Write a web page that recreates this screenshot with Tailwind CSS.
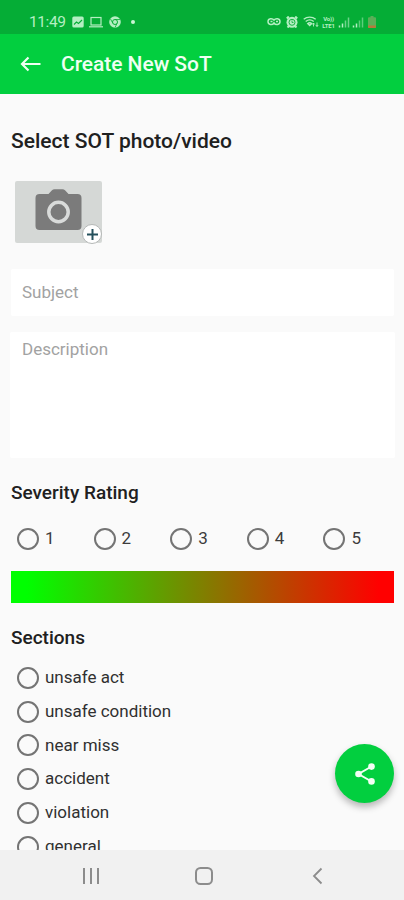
<!DOCTYPE html>
<html lang="en">
<head>
<meta charset="utf-8">
<meta name="viewport" content="width=device-width, initial-scale=1">
<title>Create New SoT</title>
<script src="https://cdn.jsdelivr.net/npm/@tailwindcss/browser@4"></script>
</head>
<body class="bg-[#fafafa]">
<div class="relative flex h-[900px] w-[404px] flex-col overflow-hidden bg-[#fafafa] font-['Roboto',sans-serif] text-[#202020]">
  <!-- Status bar -->
  <header class="flex h-[34px] shrink-0 items-center justify-between bg-[#05ad36] pt-[9px] pr-[28px] pl-[29px] text-[#b4efc2]">
    <div class="flex items-center">
      <span class="w-[43px] text-[15.5px] leading-4 tracking-[-0.4px]">11:49</span>
      <svg class="h-3 w-3" viewBox="0 0 12 12"><rect x=".3" y=".5" width="11.4" height="11" rx="1.5" fill="currentColor"/><path d="M2 8.500 4.500 6l2 1.500L10 4" fill="none" stroke="#05ad36" stroke-width="1.100"/></svg>
      <svg class="ml-[5px] h-3 w-[14px]" viewBox="0 0 14 12" fill="none" stroke="currentColor" stroke-width="1.2"><rect x="2" y="1.5" width="10" height="7.5"/><path d="M0 10.8h14"/></svg>
      <svg class="ml-[6px] h-3 w-3" viewBox="0 0 12 12"><circle cx="6" cy="6" r="5.8" fill="currentColor"/><circle cx="6" cy="6" r="2.5" fill="none" stroke="#05ad36"/><path d="M6 3.5h5M3.8 7.2 1.5 3M8 7.5 6 11.5" stroke="#05ad36" stroke-width=".8"/></svg>
      <span class="ml-[10px] h-[4px] w-[4px] rounded-full bg-[#c9f5d3]"></span>
    </div>
    <div class="flex items-center">
      <svg class="h-3 w-[14px]" viewBox="0 0 14 12" fill="none" stroke="currentColor" stroke-width="1.5"><path d="M7 4C5.500 2 1 2 1 5.500s4.500 4 6 1.500c1.500 2.500 6 2 6-1.500S8.500 2 7 4ZM3.500 5.500h2m3.500 0h2"/></svg>
      <svg class="ml-[5px] h-3 w-3" viewBox="0 0 12 12"><circle cx="6" cy="6.300" r="5.500" fill="currentColor"/><path d="m.8 2.500 2-2M11.200 2.500l-2-2M1.500 11.500l2-2M10.500 11.500l-2-2" stroke="currentColor" stroke-width="2"/><circle cx="6" cy="6.300" r="3" fill="none" stroke="#05ad36" stroke-width=".9"/><path d="M6 4.500v2h1.500" fill="none" stroke="#05ad36" stroke-width=".8"/></svg>
      <svg class="ml-[5px] h-3 w-[16px]" viewBox="0 0 16 12" fill="none" stroke="currentColor" stroke-width="1.300"><path d="M.7 3.300c3.500-3 8.500-3 12 0M2.700 5.500c2.500-2 5.500-2 8 0M4.700 7.500c1.300-1 2.700-1 4 0l-2 2z"/><path d="M10.500 10.500V7m-1.200 1.500L10.500 7l1.200 1.500M14 6.500v4m-1.200-1.500L14 10.500 15.200 9" stroke-width=".9"/></svg>
      <span class="ml-[2px] w-[15px] text-center text-[6px] leading-[7px] font-bold tracking-[-0.2px]">Vo))<br>LTE1</span>
      <svg class="ml-[2px] h-3 w-3" viewBox="0 0 12 12" stroke="currentColor" stroke-width="1.500"><path d="M1.500 11.500V9.500M4.500 11.500V7.500" /><path d="M7.500 11.500V4.500M10.500 11.500V1.500" opacity=".6"/></svg>
      <svg class="ml-[2px] h-3 w-3" viewBox="0 0 12 12" stroke="currentColor" stroke-width="1.500"><path d="M1.500 11.500V9.500M4.500 11.500V7.500" /><path d="M7.500 11.500V4.500M10.500 11.500V1.500" opacity=".5"/></svg>
      <svg class="ml-[4px] h-3 w-[8px]" viewBox="0 0 8 12"><path d="M2.500 0h3v1.300H7q1 0 1 1V11q0 1-1 1H1q-1 0-1-1V2.300q0-1 1-1h1.500z" fill="#5cae58"/><path d="M0 9.500h8V11q0 1-1 1H1q-1 0-1-1z" fill="#b57a3c"/></svg>
    </div>
  </header>

  <!-- App bar -->
  <nav class="flex h-[60px] shrink-0 items-center bg-[#02cf3f] pl-5 text-[#effff2]">
    <svg class="h-5 w-[21px]" viewBox="0 0 21 20" fill="none" stroke="currentColor" stroke-width="2.200"><path d="M20.500 10H2.500M8.500 3.500 2 10l6.500 6.500"/></svg>
    <h1 class="ml-5 text-[21px] leading-6 font-medium tracking-[-0.05px]">Create New SoT</h1>
  </nav>

  <!-- Form -->
  <main class="flex min-h-0 flex-1 flex-col overflow-hidden px-[11px] pt-[34px]">
    <h2 class="h-[26px] shrink-0 text-[21px] leading-[26px] font-medium whitespace-nowrap">Select SOT photo/video</h2>
    <div class="relative mt-[27px] ml-[4px] h-[62px] w-[87px] shrink-0 rounded-[2px] bg-[#d5d8d6]">
      <svg class="ml-5 h-[50px] w-[47px]" viewBox="0 0 47 50"><path d="M13.500 13 17 9.200q1-1 2.500-1h8q1.500 0 2.500 1l3.500 3.800h9q4 0 4 4v28q0 4-4 4h-38q-4 0-4-4V17q0-4 4-4z" fill="#7b7b7b"/><circle cx="23.500" cy="31" r="9.700" fill="none" stroke="#d9dbda" stroke-width="3.500"/></svg>
      <span class="absolute right-0 -bottom-px flex size-5 items-center justify-center rounded-full border border-[#b5b8b7] bg-white">
        <svg class="size-[11px]" viewBox="0 0 11 11" stroke="#24505c" stroke-width="2"><path d="M5.500 0v11M0 5.500h11"/></svg>
      </span>
    </div>
    <div class="-mr-px mt-[26px] flex h-[47px] shrink-0 items-center rounded-[2px] bg-white pl-[11px] text-[17px] text-[#a2a2a2]">Subject</div>
    <div class="-mr-[2px] -ml-px mt-[16px] h-[126px] shrink-0 rounded-[2px] bg-white pt-[7px] pl-[12px] text-[17px] leading-5 text-[#a2a2a2]">Description</div>

    <h3 class="mt-[23px] h-6 shrink-0 text-[19px] leading-6 font-medium">Severity Rating</h3>
    <div class="mt-[21px] -mr-[7px] grid h-[24px] shrink-0 grid-cols-5 items-center pl-[6px] text-[17px] text-[#3c3c3c]">
      <label class="flex items-center gap-[6px]"><span class="size-[22px] rounded-full border-2 border-[#747474]"></span>1</label>
      <label class="flex items-center gap-[6px]"><span class="size-[22px] rounded-full border-2 border-[#747474]"></span>2</label>
      <label class="flex items-center gap-[6px]"><span class="size-[22px] rounded-full border-2 border-[#747474]"></span>3</label>
      <label class="flex items-center gap-[6px]"><span class="size-[22px] rounded-full border-2 border-[#747474]"></span>4</label>
      <label class="flex items-center gap-[6px]"><span class="size-[22px] rounded-full border-2 border-[#747474]"></span>5</label>
    </div>
    <div class="mt-[21px] h-[32px] w-[383px] shrink-0 bg-[linear-gradient(90deg,#00ff00_4%,#ff0000_96%)]"></div>

    <h3 class="mt-[23px] h-6 shrink-0 text-[19px] leading-6 font-medium">Sections</h3>
    <div class="mt-[11px] flex shrink-0 flex-col pl-[6px] text-[17px] text-[#303030]">
      <label class="flex h-[33.75px] items-center gap-[6px]"><span class="size-[22px] rounded-full border-2 border-[#747474]"></span>unsafe act</label>
      <label class="flex h-[33.75px] items-center gap-[6px]"><span class="size-[22px] rounded-full border-2 border-[#747474]"></span>unsafe condition</label>
      <label class="flex h-[33.75px] items-center gap-[6px]"><span class="size-[22px] rounded-full border-2 border-[#747474]"></span>near miss</label>
      <label class="flex h-[33.75px] items-center gap-[6px]"><span class="size-[22px] rounded-full border-2 border-[#747474]"></span>accident</label>
      <label class="flex h-[33.75px] items-center gap-[6px]"><span class="size-[22px] rounded-full border-2 border-[#747474]"></span>violation</label>
      <label class="flex h-[33.75px] items-center gap-[6px]"><span class="size-[22px] rounded-full border-2 border-[#747474]"></span>general</label>
    </div>
  </main>

  <!-- Share button -->
  <button class="absolute right-[10px] bottom-[97px] flex size-[59px] items-center justify-center rounded-full bg-[#02cf3f] shadow-[0_4px_7px_rgba(0,0,0,0.28)]" aria-label="Share">
    <svg class="h-[22px] w-5" viewBox="0 0 20 22" fill="#f3fff5"><path d="M16.500 3.500 3.500 11l13 7.500" fill="none" stroke="#f3fff5" stroke-width="2"/><circle cx="16.500" cy="3.600" r="3.300"/><circle cx="3.500" cy="11" r="3.300"/><circle cx="16.500" cy="18.400" r="3.300"/></svg>
  </button>

  <!-- System navigation -->
  <footer class="flex h-[50px] shrink-0 items-center bg-[#f1f1f1] pt-px pl-[82px] text-[#8c8c8c]">
    <svg class="h-[18px] w-[18px]" viewBox="0 0 18 18" stroke="currentColor" stroke-width="2"><path d="M2 1v16M9 1v16M16 1v16"/></svg>
    <svg class="ml-[95px] h-[18px] w-[18px]" viewBox="0 0 18 18" fill="none" stroke="currentColor" stroke-width="2"><rect x="1" y="1" width="16" height="16" rx="4.500"/></svg>
    <svg class="ml-[99px] h-[18px] w-[11px]" viewBox="0 0 11 18" fill="none" stroke="currentColor" stroke-width="1.800"><path d="M9.500 1.500 2 9l7.500 7.500"/></svg>
  </footer>
</div>
</body>
</html>
